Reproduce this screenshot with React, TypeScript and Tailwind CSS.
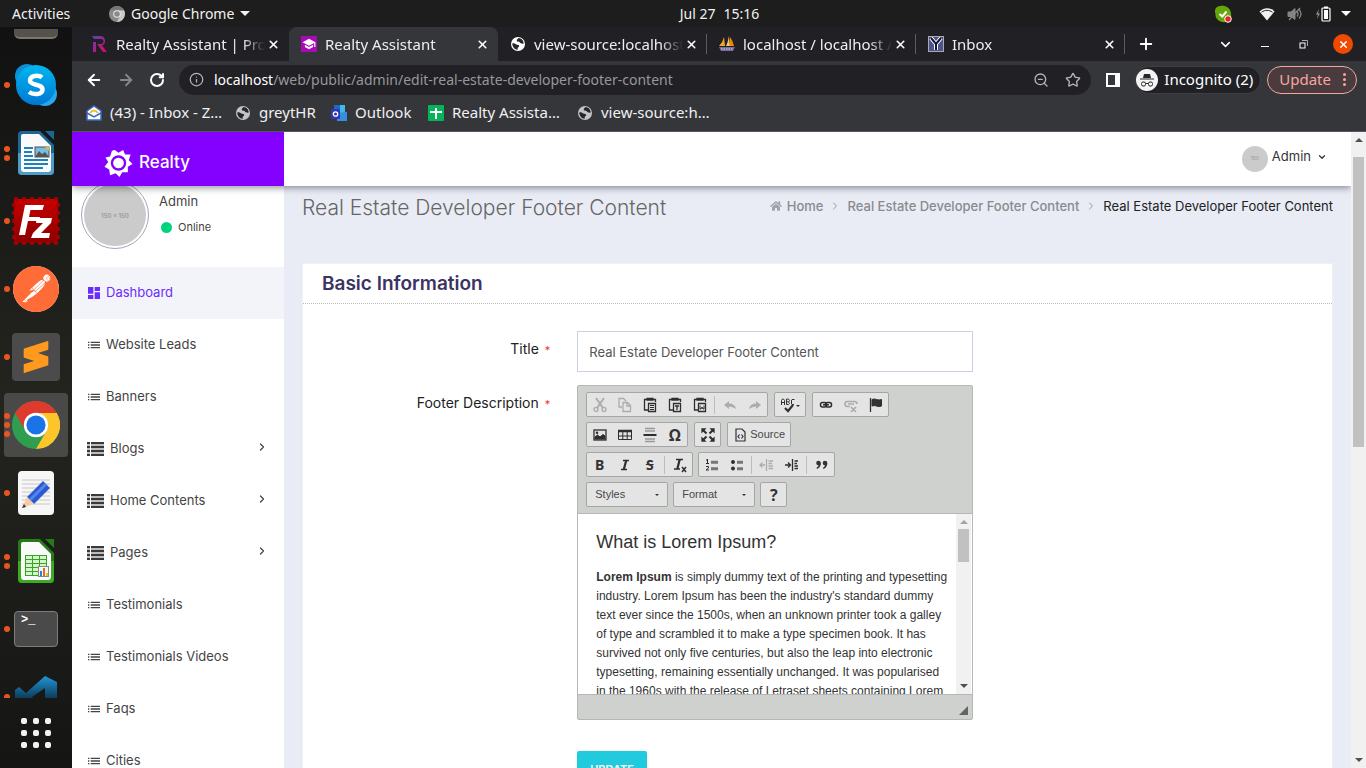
import React from 'react';
import { ArrowLeft, ArrowRight, ChevronDown, ChevronRight, Info, Plus, RotateCw, Star, X, ZoomOut } from 'lucide-react';
import { FaHome } from 'react-icons/fa';
import { MdDashboard, MdList, MdSchool } from 'react-icons/md';
import { SiPostman, SiSublimetext } from 'react-icons/si';

const cx = (...parts: string[]) => parts.filter(Boolean).join(' ');

/* ---------- shared marks ---------- */

function Globe({ tint }: { tint: string }) {
  return (
    <svg viewBox="0 0 16 16" className={cx('size-4 shrink-0', tint)} aria-hidden="true">
      <circle cx="8" cy="8" r="7" fill="currentColor" />
      <path d="M2.2 7.6 C4.5 6.2 6.2 9 8.2 9 C9.3 9.2 9.6 10.4 8.6 11 C7.6 11.6 7.4 12.6 7.9 13.8 C5 14 2.4 11.4 2.2 7.6Z" fill="#26262b" />
      <path d="M8.6 2.1 C7.6 3.4 6 4 7 5.2 C8 6 9.6 5.4 10 6.6 C10.3 7.6 12 7.8 13.8 7.6 C13.6 4.6 11.4 2.2 8.6 2.1Z" fill="#26262b" />
    </svg>
  );
}

function Tri({ up, tint }: { up?: boolean; tint: string }) {
  return (
    <svg viewBox="0 0 8 4" className={cx('h-1 w-2', tint)} aria-hidden="true">
      <path d={up ? 'M0 4 4 0 8 4Z' : 'M0 0H8L4 4Z'} fill="currentColor" />
    </svg>
  );
}

/* ---------- desktop top bar ---------- */

function TopBar() {
  return (
    <header className="flex h-[27px] shrink-0 items-center bg-[#1d1d1d] px-3 text-sm text-[#f2f2f2]">
      <div className="flex flex-1 items-center">
        <button className="w-[97px] text-left">Activities</button>
        <button className="flex items-center gap-1.5">
          <svg viewBox="0 0 16 16" className="size-4" aria-hidden="true">
            <circle cx="8" cy="8" r="8" fill="#8b8b8b" />
            <path d="M8 4.3H15a8 8 0 0 1-7 11.7L11.2 10Z" fill="#c9c9c9" />
            <path d="M1.2 4A8 8 0 0 1 15 4.3H8Z" fill="#777" />
            <circle cx="8" cy="8" r="3.8" fill="#e8e8e8" />
            <circle cx="8" cy="8" r="2.8" fill="#8a8a8a" />
          </svg>
          <span>Google Chrome</span>
          <svg viewBox="0 0 10 5" className="h-[5px] w-2.5" aria-hidden="true"><path d="M0 0H10L5 5Z" fill="currentColor" /></svg>
        </button>
      </div>
      <div className="flex gap-2 pl-[76px]"><span>Jul 27</span><span>15:16</span></div>
      <div className="flex flex-1 items-center justify-end pr-[3px]">
        <svg viewBox="0 0 18 18" className="mr-[27px] size-[18px]" aria-hidden="true">
          <path d="M6 1C10 0 17 2 17 9c1 4-1 8-5 8C6 18 1 14 1.500 9 0 5 2 1 6 1Z" fill="#64a70b" />
          <path d="M5.500 9 8.300 11.500 12.500 6.500" stroke="#fff" strokeWidth="2" fill="none" />
          <circle cx="14" cy="14" r="3.300" fill="#e32626" stroke="#fff" strokeWidth="1" />
        </svg>
        <svg viewBox="0 0 16 14" className="mr-3 h-3.5 w-4" aria-hidden="true">
          <path d="M0.500 4.500C5 0 11 0 15.500 4.500L8 13.500Z" fill="#f2f2f2" />
          <path d="M2.500 5.200C6 2.700 10 2.700 13.500 5.200" stroke="#1d1d1d" strokeWidth="1" fill="none" />
        </svg>
        <svg viewBox="0 0 16 16" className="mr-3 size-4" stroke="#858585" fill="none" aria-hidden="true">
          <path d="M1 6H4L8 2.500V13.500L4 10.500H1Z" fill="#858585" />
          <path d="M10 5.500Q12 8 10 10.500M12 3.500Q16 8 12 12.500M2 14 13 2" strokeWidth="1.300" />
        </svg>
        <svg viewBox="0 0 16 16" className="mr-2.5 size-4" aria-hidden="true">
          <path d="M4 3 1 8.500H3L2 13 5 7.500H3Z" fill="#9a9a9a" />
          <rect x="7" y="2" width="8" height="13" rx="1" fill="none" stroke="#fff" strokeWidth="1.200" />
          <rect x="9" y="0.500" width="4" height="2" fill="#fff" /><rect x="9" y="4" width="4" height="9" fill="#fff" />
        </svg>
        <svg viewBox="0 0 10 5" className="h-[5px] w-2.5" aria-hidden="true"><path d="M0 0H10L5 5Z" fill="#fff" /></svg>
      </div>
    </header>
  );
}

/* ---------- dock ---------- */

function OfficeDoc({ kind }: { kind: 'writer' | 'calc' }) {
  const w = kind === 'writer';
  const dark = w ? '#1b6796' : '#267b14';
  const mid = w ? '#4d9dc8' : '#3cab23';
  return (
    <svg viewBox="0 0 38 46" className="h-[46px] w-[38px]" aria-hidden="true">
      <path d="M5 1H23L37 15V41a4 4 0 0 1-4 4H5a4 4 0 0 1-4-4V5a4 4 0 0 1 4-4Z" fill={dark} />
      <path d="M1 23H37V41a4 4 0 0 1-4 4H5a4 4 0 0 1-4-4Z" fill={mid} />
      <path d="M6 4H22L34 16V39a3 3 0 0 1-3 3H7a3 3 0 0 1-3-3V6a2 2 0 0 1 2-2Z" fill="#fafafa" />
      <path d="M28 1H37V10Z" fill={dark} />
      {w ? (
        <g fill="#1d81bb">
          <rect x="7" y="17" width="9" height="2" /><rect x="7" y="21" width="8" height="2" /><rect x="7" y="25" width="9" height="2" />
          <rect x="7" y="29" width="24" height="2" /><rect x="7" y="33" width="24" height="2" /><rect x="7" y="37" width="19" height="2" />
          <rect x="18" y="17" width="14" height="10" fill="#76bfe2" stroke="#4f4f4f" />
          <path d="M18 27 22 21 25 24 28 22 32 27Z" fill="#555" /><path d="M28 17H32V21Z" fill="#f5bd13" />
        </g>
      ) : (
        <g>
          <rect x="8" y="17" width="22" height="21" fill="#37a523" />
          {[0, 1, 2].map((c) => [0, 1, 2, 3, 4].map((r) => (
            <rect key={`${c}-${r}`} x={9 + c * 7} y={18 + r * 4} width="6" height="3" fill="#d7f5cd" />
          )))}
          <rect x="21.500" y="28.500" width="10" height="10" fill="#f7f7f7" stroke="#888" />
          <rect x="23" y="33" width="2" height="5" fill="#208ac9" /><rect x="26" y="30" width="2" height="8" fill="#e56b1d" /><rect x="29" y="35" width="2" height="3" fill="#f1bd25" />
        </g>
      )}
    </svg>
  );
}

function ChromeMark() {
  return (
    <svg viewBox="0 0 48 48" className="size-12" aria-hidden="true">
      <circle cx="24" cy="24" r="24" fill="#2f9e4f" />
      <path d="M3.200 12A24 24 0 0 1 44.800 12H24A12 12 0 0 0 13.600 30Z" fill="#de3a2d" />
      <path d="M44.800 12A24 24 0 0 1 24 48L34.400 30A12 12 0 0 0 24 12Z" fill="#fdc52c" />
      <circle cx="24" cy="24" r="12.200" fill="#fff" /><circle cx="24" cy="24" r="9.600" fill="#1b73e8" />
    </svg>
  );
}

function DockItem({ label, dots, active, children }: { label: string; dots: number; active?: boolean; children: React.ReactNode }) {
  return (
    <button aria-label={label} className="flex h-[68px] w-full shrink-0 items-center">
      <span className={cx('ml-1 flex h-16 w-16 items-center rounded', active ? 'bg-[#494947]' : '')}>
        <span className="flex w-2 shrink-0 flex-col items-start gap-[3px]">
          {Array.from({ length: dots }, (_, i) => <i key={i} className="size-1.5 rounded-full bg-[#e95420]" />)}
        </span>
        <span className="flex w-12 justify-center">{children}</span>
      </span>
    </button>
  );
}

function Dock() {
  return (
    <nav aria-label="Dock" className="flex w-[72px] shrink-0 flex-col overflow-hidden bg-linear-to-b from-[#111] via-[#24241f] to-[#151614]">
      <div className="flex h-6 shrink-0 justify-center">
        <span className="mt-0.5 h-2.5 w-11 rounded-b-md border-b-2 border-[#7c776c] bg-[#55524d]" />
      </div>
      <DockItem label="Skype" dots={1}>
        <svg viewBox="0 0 44 44" className="size-11" aria-hidden="true">
          <defs><linearGradient id="sk" x2="0" y2="1"><stop stopColor="#00b7f0" /><stop offset="1" stopColor="#0078d4" /></linearGradient></defs>
          <circle cx="13" cy="13" r="12" fill="#0a8fd8" /><circle cx="31" cy="31" r="12" fill="#28a8ea" />
          <circle cx="22" cy="22" r="20" fill="url(#sk)" />
          <path d="M28 14.500C25 12 16 12 16 17.500 16 23 28.500 20.500 28.500 26.500 28.500 32 19 32 15 29" fill="none" stroke="#fff" strokeWidth="4.500" />
        </svg>
      </DockItem>
      <DockItem label="LibreOffice Writer" dots={2}><OfficeDoc kind="writer" /></DockItem>
      <DockItem label="FileZilla" dots={1}>
        <svg viewBox="0 0 48 48" className="size-12" aria-hidden="true">
          <defs><linearGradient id="fz" x2="0" y2="1"><stop stopColor="#c80000" /><stop offset="1" stopColor="#8b0000" /></linearGradient></defs>
          <rect x="2" y="2" width="44" height="44" fill="url(#fz)" />
          <rect x="2" y="2" width="44" height="44" fill="none" stroke="#a80000" strokeWidth="3.500" strokeDasharray="4 4" />
          <path d="M13 8H32L30.500 13H18.500L17 20H28L27 24H16L13 38H7Z" fill="#fff" />
          <path d="M25 21H40L39 26 29 36H38L37 41H19L21 36 31 26H24Z" fill="#fff" />
        </svg>
      </DockItem>
      <DockItem label="Postman" dots={1}>
        <span className="flex size-[46px] items-center justify-center rounded-full bg-white"><SiPostman className="size-[46px] text-[#ff6c37]" /></span>
      </DockItem>
      <DockItem label="Sublime Text" dots={1}>
        <span className="flex size-12 items-center justify-center rounded bg-[#4b4b4b]"><SiSublimetext className="size-8 text-[#ff9a1e]" /></span>
      </DockItem>
      <DockItem label="Google Chrome" dots={3} active><ChromeMark /></DockItem>
      <DockItem label="Text Editor" dots={1}>
        <svg viewBox="0 0 38 46" className="h-[46px] w-[38px]" aria-hidden="true">
          <rect x="1" y="1" width="36" height="44" rx="4" fill="#f6f6f6" />
          <path d="M5 10H33M5 14H33M5 18H33M5 22H33M5 26H33M5 30H33M5 34H33" stroke="#c6c6c6" />
          <path d="M10 27 26 11 33 18 17 34Z" fill="#2a5bd1" /><path d="M12 29 28 13 30 15 14 31Z" fill="#5685ee" />
          <path d="M10 27 17 34 5 38Z" fill="#f4ccaa" /><path d="M7 34 9 37 5 38Z" fill="#333" />
        </svg>
      </DockItem>
      <DockItem label="LibreOffice Calc" dots={2}><OfficeDoc kind="calc" /></DockItem>
      <DockItem label="Terminal" dots={1}>
        <span className="flex h-9 w-11 rounded border border-[#7d7d7d] bg-[#4a4a4a] pl-1.5 font-['Liberation_Mono',monospace] text-xs font-bold text-white">&gt;_</span>
      </DockItem>
      <div className="h-[35px] shrink-0 overflow-hidden">
        <DockItem label="Visual Studio Code" dots={1}>
          <svg viewBox="0 0 42 42" className="size-[42px]" aria-hidden="true">
            <defs><linearGradient id="vs" x2="0" y2="1"><stop stopColor="#2196d8" /><stop offset=".5" stopColor="#0d405f" /></linearGradient></defs>
            <path d="M30 0 42 6V36L30 42 11 25 4 31 0 28V14L4 11 11 17Z M30 12 17 21 30 30Z" fillRule="evenodd" fill="url(#vs)" />
          </svg>
        </DockItem>
      </div>
      <button aria-label="Show Applications" className="flex min-h-[70px] flex-1 items-center justify-center">
        <span className="grid grid-cols-3 gap-1.5">
          {Array.from({ length: 9 }, (_, i) => <i key={i} className="size-1.5 rounded-xs bg-[#f2f2ef]" />)}
        </span>
      </button>
    </nav>
  );
}

/* ---------- browser chrome ---------- */

function Tab({ label, icon, active, divider }: { label: string; icon: React.ReactNode; active?: boolean; divider?: boolean }) {
  return (
    <div className={cx('relative flex h-full max-w-[209px] flex-1 items-center pr-2 pl-3', active ? 'rounded-t-lg bg-[#35363a]' : '')}>
      {icon}
      <span className="ml-2 min-w-0 flex-1 overflow-hidden mask-r-from-85% text-[15px] whitespace-nowrap text-[#eeeef0]">{label}</span>
      <button aria-label={`Close ${label}`} className="flex size-4 items-center justify-center"><X size={13} strokeWidth={3} /></button>
      {divider && <i className="absolute top-[7px] right-0 h-5 w-px bg-[#5b5b60]" />}
    </div>
  );
}

function TabStrip() {
  return (
    <div className="flex h-[34px] shrink-0 items-center bg-[#202025] pl-2 text-white">
      <Tab label="Realty Assistant | Pro" icon={
        <svg viewBox="0 0 16 16" className="size-4 shrink-0" aria-hidden="true">
          <defs><linearGradient id="ra" x2="1" y2="1"><stop stopColor="#5145b8" /><stop offset="1" stopColor="#ee0060" /></linearGradient></defs>
          <path d="M0 0H9A5 5 0 0 1 10 9.500L15 16H11L5 8H9A2 2 0 0 0 9 3H2Z M1 6H4V16H1Z" fill="url(#ra)" />
        </svg>} />
      <Tab active label="Realty Assistant" icon={<span className="flex size-4 shrink-0 items-center justify-center bg-[#a80bb4] text-white"><MdSchool size={14} /></span>} />
      <Tab divider label="view-source:localhost" icon={<Globe tint="text-white" />} />
      <Tab divider label="localhost / localhost /" icon={
        <svg viewBox="0 0 16 16" className="size-4 shrink-0" aria-hidden="true">
          <path d="M5 1 6 10H0Q4 6 5 1Z" fill="#f5a623" /><path d="M10 0Q9 6 7 10H11Z" fill="#f9c56a" /><path d="M11 1Q14 5 15 10H11Z" fill="#f08b00" />
          <path d="M0 11H16L14 15H2Z" fill="#776a9e" /><path d="M2 13H14" stroke="#d6d0e8" strokeDasharray="1.500 1" />
        </svg>} />
      <Tab divider label="Inbox" icon={
        <svg viewBox="0 0 16 16" className="size-4 shrink-0" aria-hidden="true">
          <rect x="0.500" y="0.500" width="15" height="15" fill="#4d538e" stroke="#aaa" />
          <path d="M3 2 8 8 13 2M8 8V14" stroke="#fff" strokeWidth="4" fill="none" /><path d="M3 2 8 8 13 2M8 8V14" stroke="#14143a" strokeWidth="2" fill="none" />
        </svg>} />
      <button aria-label="New tab" className="ml-3 flex size-[18px] items-center justify-center"><Plus size={18} strokeWidth={2.5} /></button>
      <div className="ml-auto flex items-center pr-[13px]">
        <button aria-label="Search tabs" className="flex w-[39px] justify-center"><ChevronDown size={15} strokeWidth={2.5} /></button>
        <button aria-label="Minimize" className="flex h-4 w-[39px] items-center justify-center"><i className="mt-1 h-px w-2 bg-white" /></button>
        <button aria-label="Restore" className="flex w-[39px] justify-center">
          <svg viewBox="0 0 9 9" className="size-[9px]" fill="none" stroke="#fff" aria-hidden="true"><rect x="1" y="3" width="5" height="5" /><path d="M3 .5H8.500V6" stroke="#aaa" /></svg>
        </button>
        <button aria-label="Close window" className="ml-2.5 flex size-5 items-center justify-center rounded-full bg-[#f04a00]"><X size={11} strokeWidth={3} /></button>
      </div>
    </div>
  );
}

function Toolbar() {
  return (
    <div className="flex h-[37px] shrink-0 items-center bg-[#35363a] pr-[9px] pl-[13px] text-white">
      <button aria-label="Back" className="mr-3.5"><ArrowLeft size={18} strokeWidth={2.5} /></button>
      <button aria-label="Forward" className="mr-3.5 text-[#85868a]"><ArrowRight size={18} strokeWidth={2.5} /></button>
      <button aria-label="Reload" className="mr-3.5"><RotateCw size={16} strokeWidth={3} /></button>
      <div className="flex h-[30px] min-w-0 flex-1 items-center rounded-full bg-[#202025] px-2.5 text-[#b4b5b9]">
        <Info size={15} className="shrink-0" />
        <div className="ml-2.5 min-w-0 flex-1 truncate text-sm text-[#97989b]"><span className="text-white">localhost</span>/web/public/admin/edit-real-estate-developer-footer-content</div>
        <button aria-label="Zoom" className="mr-4"><ZoomOut size={16} /></button>
        <button aria-label="Bookmark this page"><Star size={16} /></button>
      </div>
      <button aria-label="Side panel" className="mx-[15px] flex h-3.5 w-3.5 border-2 border-r-[5px] border-white" />
      <button className="mr-1.5 flex h-7 items-center gap-1.5 rounded-full border border-[#3f4045] bg-[#202025] pr-[7px] text-[15px]">
        <svg viewBox="0 0 22 22" className="size-[22px]" aria-hidden="true">
          <circle cx="11" cy="11" r="11" fill="#f4f4f4" /><path d="M7 9 8 5 14 5 15 9ZM4 9.500H18V10.500H4Z" fill="#26262b" />
          <g fill="none" stroke="#26262b"><rect x="5.500" y="13" width="4" height="4" rx="1.500" /><rect x="12.500" y="13" width="4" height="4" rx="1.500" /><path d="M9.500 14.500H12.500" /></g>
        </svg>
        Incognito (2)
      </button>
      <button className="flex h-7 items-center rounded-full border border-[#f4a79e] bg-[#493b3e] pr-2.5 pl-[11px] text-[15px] text-[#f4a79e]">
        Update
        <span className="ml-3 flex flex-col gap-0.5"><i className="size-[3px] rounded-full bg-current" /><i className="size-[3px] rounded-full bg-current" /><i className="size-[3px] rounded-full bg-current" /></span>
      </button>
    </div>
  );
}

function Bookmark({ width, label, children }: { width: string; label: string; children: React.ReactNode }) {
  return (
    <a href="#bookmark" className={cx('flex shrink-0 items-center', width)}>
      {children}<span className="ml-2 whitespace-nowrap">{label}</span>
    </a>
  );
}

function Bookmarks() {
  return (
    <nav aria-label="Bookmarks" className="flex h-[34px] shrink-0 items-center border-b border-[#55565a] bg-[#35363a] pb-1 pl-3.5 text-[15px] text-[#f0f0f2]">
      <Bookmark width="w-[149px]" label="(43) - Inbox - Z…">
        <svg viewBox="0 0 16 16" className="size-4" aria-hidden="true">
          <path d="M1 6 8 1 15 6V15H1Z" fill="#fff" stroke="#376ac4" strokeWidth="1.500" /><path d="M1 8 8 12 15 8" fill="none" stroke="#376ac4" strokeWidth="1.500" /><path d="M4 8Q8 3 12 8" fill="none" stroke="#f1bd27" strokeWidth="2" />
        </svg>
      </Bookmark>
      <Bookmark width="w-24" label="greytHR"><Globe tint="text-[#c3c4c9]" /></Bookmark>
      <Bookmark width="w-[97px]" label="Outlook">
        <svg viewBox="0 0 16 16" className="size-4" aria-hidden="true">
          <path d="M3 0H14V9H3Z" fill="#40b8ec" /><path d="M3 0H9V5H3Z" fill="#1470bd" /><path d="M6 8 16 7V16H6Z" fill="#348fdf" />
          <rect y="4" width="9" height="10" rx="1" fill="#3434b4" /><circle cx="4.500" cy="9" r="2.200" fill="none" stroke="#fff" strokeWidth="1.300" />
        </svg>
      </Bookmark>
      <Bookmark width="w-[149px]" label="Realty Assista…">
        <svg viewBox="0 0 16 16" className="size-4" aria-hidden="true"><rect width="16" height="16" rx="1" fill="#07b35a" /><path d="M2 7H14M8 3V14" stroke="#fff" strokeWidth="2" /></svg>
      </Bookmark>
      <Bookmark width="w-36" label="view-source:h…"><Globe tint="text-[#c3c4c9]" /></Bookmark>
    </nav>
  );
}

/* ---------- site ---------- */

function SiteHeader() {
  return (
    <header className="relative z-10 flex h-[54px] shrink-0 bg-white shadow-[0_1px_8px_rgba(0,0,0,0.5)]">
      <a href="#home" className="flex w-[212px] items-center gap-1.5 bg-[#8400ff] pt-2 pl-8 text-[17px] font-medium text-white">
        <svg viewBox="0 0 30 30" className="h-7 w-[29px]" aria-hidden="true">
          <path d="M11 1 15 4 20 1 22 6 28 6 26 12 30 16 25 19 25 25 19 25 16 30 12 26 6 28 5 22 0 19 4 14 1 9 6 8 8 2Z" fill="#fff" />
          <circle cx="15" cy="15" r="7" fill="#fff" stroke="#8400ff" strokeWidth="2.500" />
        </svg>
        Realty
      </a>
      <button className="mr-6 ml-auto flex items-center text-[13px] text-[#333]">
        <span className="mr-1 flex size-[26px] items-center justify-center rounded-full bg-[#cbcbcb] text-[5px] text-[#999]">150</span>
        <span className="mb-1">Admin</span>
        <ChevronDown size={10} strokeWidth={3} className="mb-1 ml-1.5" />
      </button>
    </header>
  );
}

const menu = [
  { label: 'Dashboard', kind: 'dash' },
  { label: 'Website Leads', kind: 'link' },
  { label: 'Banners', kind: 'link' },
  { label: 'Blogs', kind: 'group' },
  { label: 'Home Contents', kind: 'group' },
  { label: 'Pages', kind: 'group' },
  { label: 'Testimonials', kind: 'link' },
  { label: 'Testimonials Videos', kind: 'link' },
  { label: 'Faqs', kind: 'link' },
  { label: 'Cities', kind: 'link' },
];

function BarsIcon() {
  return (
    <svg viewBox="0 0 17 14" className="mr-1.5 h-3.5 w-[17px]" aria-hidden="true">
      <path d="M4 0H17V14H4ZM0 0H3V14H0Z" fill="#bdbdbd" />
      {[0, 4, 8, 12].map((y) => <path key={y} d={`M0 ${y}H3V${y + 2}H0ZM4 ${y}H17V${y + 2}H4Z`} fill="#3a3a3a" />)}
    </svg>
  );
}

function Sidebar() {
  return (
    <aside className="w-[212px] shrink-0 bg-white text-[13px] text-[#444]">
      <div className="-mt-[5px] flex h-[86px] pl-[9px]">
        <span className="flex size-[68px] shrink-0 items-center justify-center rounded-full border border-[#a4a7bd] p-0.5">
          <span className="flex size-full items-center justify-center rounded-full bg-[#cbcbcb] text-[6px] font-bold text-[#a0a0a0]">150 x 150</span>
        </span>
        <div className="pt-2.5 pl-2.5">
          <p className="leading-5">Admin</p>
          <p className="mt-2 flex items-center gap-1.5 pl-0.5 text-[11px] leading-4"><i className="size-[11px] rounded-full bg-[#00d47e]" />Online</p>
        </div>
      </div>
      <nav aria-label="Main menu">
        {menu.map(({ label, kind }) => (
          <a key={label} href="#menu" className={cx('flex h-[52px] items-center pr-4 pl-[15px]', kind === 'dash' ? 'bg-[#f3f4f9] text-[#6c2bff]' : '')}>
            {kind === 'dash' && <MdDashboard size={16} className="mr-1 -ml-px" />}
            {kind === 'link' && <MdList size={16} className="mr-1 -ml-px" />}
            {kind === 'group' && <BarsIcon />}
            {label}
            {kind === 'group' && <ChevronRight size={12} strokeWidth={2.5} className="mb-1 ml-auto" />}
          </a>
        ))}
      </nav>
    </aside>
  );
}

/* ---------- rich text editor ---------- */

function Tool({ label, off, children }: { label: string; off?: boolean; children: React.ReactNode }) {
  return (
    <button type="button" aria-label={label} className={cx('flex h-full w-[25px] items-center justify-center', off ? 'opacity-30' : '')}>
      <svg viewBox="0 0 16 16" className="size-4" fill="none" stroke="#2e2e2e" strokeWidth="1.300" aria-hidden="true">{children}</svg>
    </button>
  );
}

function Letter({ label, glyph, style }: { label: string; glyph: string; style: string }) {
  return <button type="button" aria-label={label} className={cx("h-full w-[25px] text-center font-['Noto_Sans',sans-serif] leading-none font-bold text-[#333]", style)}>{glyph}</button>;
}

const Group = ({ children }: { children: React.ReactNode }) => (
  <div className="flex h-[25px] items-center rounded-xs border border-[#a6a6a6] bg-[#e4e4e4]">{children}</div>
);
const Sep = () => <i className="mx-0.5 h-[18px] w-px bg-[#bdbdbd]" />;
const Clip = () => <path d="M4.500 2.500H2.500V13H6M11.500 2.500H13.500V5M5 1.500H11V3H5ZM6.500 6.500H13.500V14.500H6.500Z" />;

function Combo({ label }: { label: string }) {
  return (
    <button type="button" className="flex h-[25px] w-[82px] items-center justify-between rounded-xs border border-[#a6a6a6] bg-[#e4e4e4] px-2 text-[11px] text-[#484848]">
      {label}
      <svg viewBox="0 0 4 2" className="h-0.5 w-1" aria-hidden="true"><path d="M0 0H4L2 2Z" fill="#333" /></svg>
    </button>
  );
}

function Editor() {
  return (
    <div className="rounded-xs border border-[#b6b6b6] bg-[#cfd1cf] font-['Liberation_Sans',Arial,sans-serif]">
      <div role="toolbar" aria-label="Editor toolbar" className="flex flex-col gap-[5px] border-b border-[#b6b6b6] px-2 pt-1.5 pb-1.5">
        <div className="flex gap-1.5">
          <Group>
            <Tool label="Cut" off><path d="M4 1 11 11M12 1 5 11" strokeWidth="2" /><circle cx="4" cy="12.500" r="2" /><circle cx="12" cy="12.500" r="2" /></Tool>
            <Tool label="Copy" off><path d="M5 10H2V1.500H6.500L9 4M6 5.500H10.500L13.500 8.500V14.500H6ZM10 5.500V9H13.500" /></Tool>
            <Tool label="Paste"><Clip /><path d="M8 8.500H12M8 10.500H12M8 12.500H12" strokeWidth="1" /></Tool>
            <Tool label="Paste as plain text"><Clip /><path d="M8 9H12M10 9V13" /></Tool>
            <Tool label="Paste from Word"><Clip /><path d="M8 8.500V12H9L10 10 11 12H12V8.500" strokeWidth="1" /></Tool>
            <Sep />
            <Tool label="Undo" off><path d="M2 8 7 4V6.500Q13 6.500 14 12 11 9.500 7 9.500V12Z" fill="#2e2e2e" stroke="none" /></Tool>
            <Tool label="Redo" off><path d="M14 8 9 4V6.500Q3 6.500 2 12 5 9.500 9 9.500V12Z" fill="#2e2e2e" stroke="none" /></Tool>
          </Group>
          <Group>
            <button type="button" aria-label="Spell check" className="flex h-full w-[30px] items-center justify-center">
              <svg viewBox="0 0 20 16" className="h-4 w-5" fill="none" stroke="#333" aria-hidden="true">
                <path d="M1.500 8V3.500L2.500 2H3.500L4.500 3.500V8M1.500 5.500H4.500M6.500 2V7.500H8.500L9.500 6.500 8.500 4.800H6.500M8.500 4.800 9.500 3.500 8.500 2H6.500M14.500 2.500H12L11.500 3V7L12 7.500H14" />
                <path d="M5 11 8 14 13 8" strokeWidth="2.200" /><path d="M16 8H20L18 10Z" fill="#333" stroke="none" />
              </svg>
            </button>
          </Group>
          <Group>
            <Tool label="Link"><rect x="2.500" y="5.500" width="6" height="4.500" rx="2" strokeWidth="1.500" /><rect x="7.500" y="5.500" width="6" height="4.500" rx="2" strokeWidth="1.500" /><path d="M5 7.800H11" strokeWidth="1.500" /></Tool>
            <Tool label="Unlink" off><path d="M7 9.500H4.500Q2 9.500 2 7T4.500 4.500H11.500Q14 4.500 14 7M5 7H11M8 10 13 15M13 10 8 15" strokeWidth="1.600" /></Tool>
            <Tool label="Anchor"><path d="M2.500 1V15" strokeWidth="1.300" /><path d="M4 2.500Q6 1.500 8.500 2.500T13.500 2.500V9Q11 10 8.500 9T4 9Z" fill="#333" strokeWidth="1" /></Tool>
          </Group>
        </div>
        <div className="flex gap-1.5">
          <Group>
            <Tool label="Image"><rect x="2" y="3" width="12" height="10" /><path d="M3 12V10L5.500 8 8 10 11 7.500 13 9V12Z" fill="#2e2e2e" strokeWidth="1" /><circle cx="5" cy="5.800" r=".6" /></Tool>
            <Tool label="Table"><path d="M1.500 3.500H14.500V12.500H1.500ZM1.500 9H14.500M5.800 5V13M10.200 5V13" strokeWidth="1" /><path d="M1 4H15" strokeWidth="2.500" /></Tool>
            <Tool label="Horizontal line"><path d="M3 1.500H13M3 4H13M3 12H13M3 14.500H13" stroke="#999" /><path d="M1.500 8H14.500" strokeWidth="2" /></Tool>
            <Letter label="Special character" glyph="Ω" style="text-base" />
          </Group>
          <Group>
            <Tool label="Maximize"><path d="M2 5V2H5ZM11 2H14V5ZM2 11V14H5ZM14 11V14H11Z" fill="#2e2e2e" /><path d="M3 3 6.500 6.500M13 3 9.500 6.500M3 13 6.500 9.500M13 13 9.500 9.500" strokeWidth="2" /></Tool>
          </Group>
          <Group>
            <button type="button" className="flex h-full items-center gap-[3px] px-[5px] text-[11px] text-[#484848]">
              <svg viewBox="0 0 14 16" className="h-4 w-3.5" fill="none" stroke="#333" strokeWidth="1.200" aria-hidden="true"><path d="M3 2H9L12 5V14H3ZM6.500 7.500 5 9.500 6.500 11.500M8.500 7.500 10 9.500 8.500 11.500" /></svg>
              Source
            </button>
          </Group>
        </div>
        <div className="flex gap-[5px]">
          <Group>
            <Letter label="Bold" glyph="B" style="text-sm" />
            <Tool label="Italic"><path d="M6 3.500H12M4 12.500H10" strokeWidth="1.500" /><path d="M9.200 3.500 6.800 12.500" strokeWidth="2.200" /></Tool>
            <Letter label="Strikethrough" glyph="S" style="text-sm line-through" />
            <Sep />
            <Tool label="Remove format"><path d="M4 2.500H11M2 12H8" strokeWidth="1.500" /><path d="M7.700 2.500 5.300 12" strokeWidth="2.200" /><path d="M10 10 14 15M14 10 10 15" strokeWidth="1.500" /></Tool>
          </Group>
          <Group>
            <Tool label="Numbered list"><path d="M7 4.500H14M7 6H14M7 11H14M7 12.500H14" stroke="#777" /><path d="M3.500 2V6.500M2 3H3.500M2 6.500H5M2 9.500H4.500V11L2 13H5" strokeWidth="1" /></Tool>
            <Tool label="Bulleted list"><path d="M8 4.500H14M8 6H14M8 11H14M8 12.500H14" stroke="#777" /><circle cx="4" cy="5" r="1.300" fill="#333" /><circle cx="4" cy="11.500" r="1.300" fill="#333" /></Tool>
            <Sep />
            <Tool label="Decrease indent" off><path d="M7.500 2V14M9.500 4H14M9.500 6.500H13M9.500 9H14M9.500 11.500H14M1 8H6M3.500 5.500 1 8 3.500 10.500" /></Tool>
            <Tool label="Increase indent"><path d="M8.500 2V14M10.500 4H14M10.500 6.500H13M10.500 9H14M10.500 11.500H14M1 8H6M4 5.500 6.500 8 4 10.500" /></Tool>
            <Sep />
            <Tool label="Block quote"><g fill="#333" stroke="none"><circle cx="4.500" cy="6" r="2.300" /><circle cx="11" cy="6" r="2.300" /><path d="M6.800 6Q7 10 3 12L2.500 11Q5 9.500 4.500 7ZM13.300 6Q13.500 10 9.500 12L9 11Q11.500 9.500 11 7Z" /></g></Tool>
          </Group>
        </div>
        <div className="flex gap-[5px]">
          <Combo label="Styles" />
          <Combo label="Format" />
          <Group><Letter label="About" glyph="?" style="text-base" /></Group>
        </div>
      </div>
      <div className="flex h-[180px] bg-white">
        <div role="textbox" aria-multiline="true" aria-labelledby="desc-label" tabIndex={0} className="min-w-0 flex-1 overflow-hidden pt-4 pr-1.5 pl-[18px] text-[#333]">
          <h2 className="text-lg leading-6">What is Lorem Ipsum?</h2>
          <p className="mt-3.5 text-xs leading-[19px]">
            <strong>Lorem Ipsum</strong> is simply dummy text of the printing and typesetting industry. Lorem Ipsum has been the industry's standard dummy text ever since the 1500s, when an unknown printer took a galley of type and scrambled it to make a type specimen book. It has survived not only five centuries, but also the leap into electronic typesetting, remaining essentially unchanged. It was popularised in the 1960s with the release of Letraset sheets containing Lorem
          </p>
        </div>
        <div className="mr-px flex w-[15px] flex-col items-center bg-[#f1f1f1] py-1.5" aria-hidden="true">
          <Tri up tint="text-[#a3a3a3]" />
          <i className="mt-[5px] h-[33px] w-[11px] bg-[#c1c1c1]" />
          <span className="mt-auto"><Tri tint="text-[#505050]" /></span>
        </div>
      </div>
      <div className="flex h-[25px] items-end justify-end border-t border-[#b6b6b6] p-1">
        <svg viewBox="0 0 9 9" className="size-[9px]" aria-hidden="true"><path d="M9 0V9H0Z" fill="#636463" /></svg>
      </div>
    </div>
  );
}

function Content() {
  return (
    <main className="min-w-0 flex-1 bg-[#e9ecf5] px-[18px]">
      <div className="flex h-[77px] items-start justify-between pt-2">
        <h1 className="text-[21px] leading-7 font-light whitespace-nowrap text-[#666]">Real Estate Developer Footer Content</h1>
        <nav aria-label="Breadcrumb" className="flex items-center text-[13px] leading-6 font-medium whitespace-nowrap text-[#8a8a8e]">
          <FaHome size={12} className="mr-[5px] text-[#a0a3ab]" />
          <a href="#home">Home</a>
          <ChevronRight size={12} className="mx-1.5 text-[#999]" />
          <a href="#footer">Real Estate Developer Footer Content</a>
          <ChevronRight size={12} className="mx-1.5 text-[#999]" />
          <span className="font-normal text-[#222]">Real Estate Developer Footer Content</span>
        </nav>
      </div>
      <section className="border border-[#f0f1f5] bg-white pb-10">
        <h2 className="border-b border-dotted border-[#bbb] px-[19px] py-1.5 text-[19px] leading-[27px] font-semibold text-[#3b3363]">Basic Information</h2>
        <form className="pt-[27px]" onSubmit={(e) => e.preventDefault()}>
          <div className="flex">
            <label htmlFor="title" className="w-1/4 pt-2 pr-2.5 text-right text-sm leading-5 text-[#222]">Title <span className="ml-0.5 text-[11px] text-[#f03434]">*</span></label>
            <div className="w-5/12 pr-4 pl-[17px]">
              <input id="title" defaultValue="Real Estate Developer Footer Content" className="h-[41px] w-full border border-[#cfcfe0] bg-white px-[11px] text-[13px] text-[#555]" />
            </div>
          </div>
          <div className="mt-[13px] flex">
            <span id="desc-label" className="w-1/4 pt-2 pr-2.5 text-right text-sm leading-5 text-[#222]">Footer Description <span className="ml-0.5 text-[11px] text-[#f03434]">*</span></span>
            <div className="w-5/12 pr-4 pl-[17px]"><Editor /></div>
          </div>
          <div className="mt-[31px] flex">
            <div className="ml-[25%] pr-4 pl-[17px]">
              <button type="submit" className="h-9 rounded-xs bg-[#21cbdd] px-[13px] text-[11px] font-semibold text-white shadow">UPDATE</button>
            </div>
          </div>
        </form>
      </section>
    </main>
  );
}

export default function App() {
  return (
    <div className="flex h-screen flex-col overflow-hidden font-['Noto_Sans',sans-serif]">
      <TopBar />
      <div className="flex min-h-0 flex-1">
        <Dock />
        <div className="flex min-w-0 flex-1 flex-col">
          <TabStrip />
          <Toolbar />
          <Bookmarks />
          <div className="flex min-h-0 flex-1 font-['Inter',sans-serif]">
            <div className="flex min-w-0 flex-1 flex-col overflow-hidden">
              <SiteHeader />
              <div className="flex min-h-0 flex-1">
                <Sidebar />
                <Content />
              </div>
            </div>
            <div className="flex w-[15px] shrink-0 flex-col items-center bg-[#f1f1f1] py-1.5" aria-hidden="true">
              <Tri up tint="text-[#505050]" />
              <i className="mt-[15px] h-[290px] w-[11px] bg-[#c1c1c1]" />
              <span className="mt-auto"><Tri tint="text-[#505050]" /></span>
            </div>
          </div>
        </div>
      </div>
    </div>
  );
}
